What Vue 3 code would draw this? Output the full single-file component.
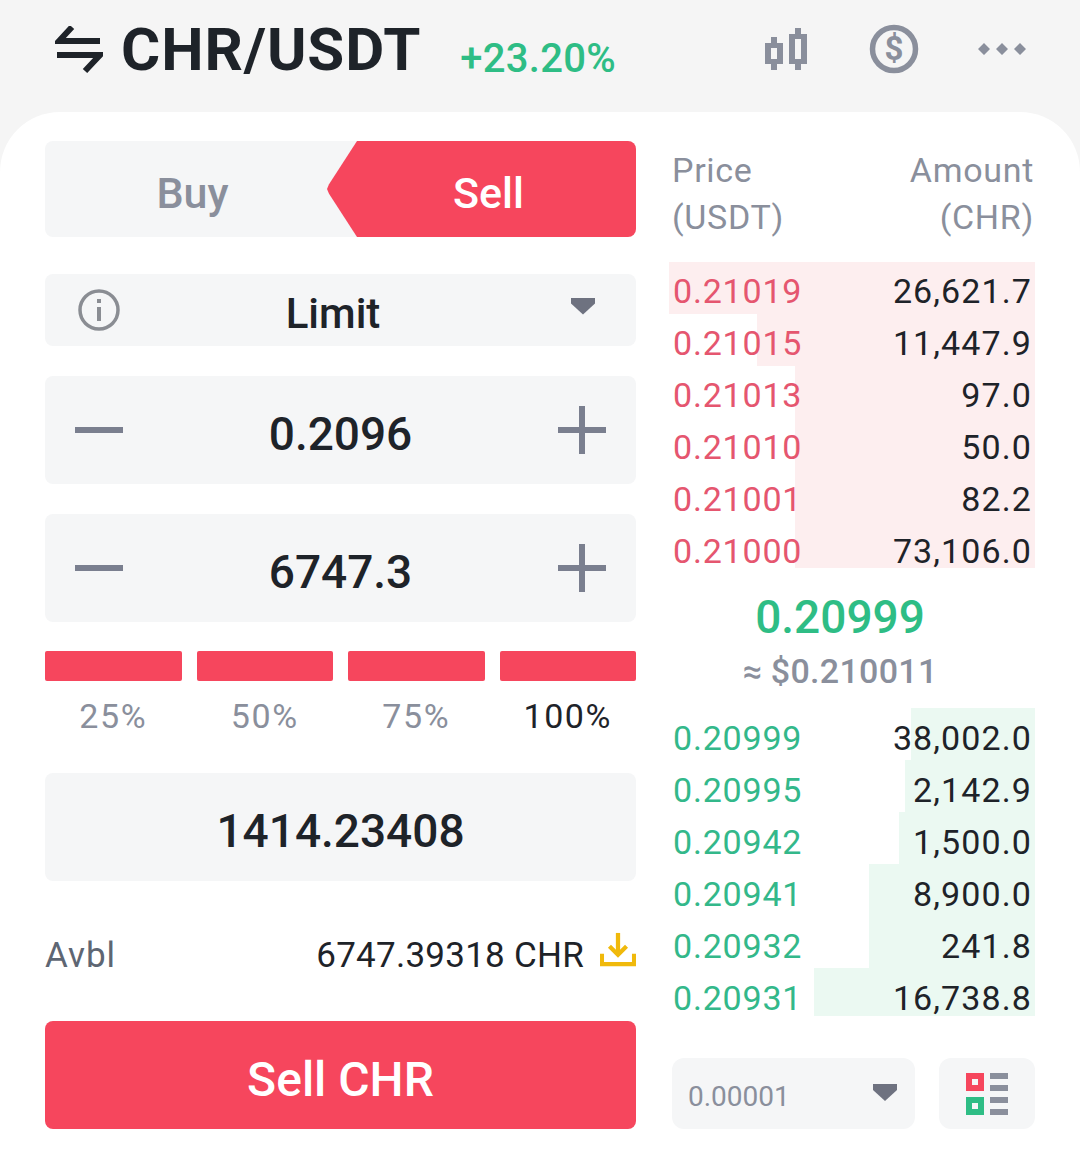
<template>
  <div class="screen">
    <header class="top">
      <svg class="swap" width="48" height="48" viewBox="0 0 48 48" fill="none" stroke="#1e2329" stroke-width="6">
        <path d="M17 1 4 15h41" />
        <path d="M2 29h43L30 45" />
      </svg>
      <span class="pair">CHR/USDT</span>
      <span class="change">+23.20%</span>
      <div class="top-icons">
        <svg width="42" height="42" viewBox="0 0 42 42" fill="#8a8f9c" fill-rule="evenodd">
          <path d="M6 9h6v6h6v21h-6v6H6v-6H0V15h6zM6 20v11h6V20z" />
          <path d="M30 0h6v6h6v30h-6v6h-6v-6h-6V6h6zM30 11v20h6V11z" />
        </svg>
        <svg width="50" height="50" viewBox="0 0 50 50" fill="none" stroke="#8a8f9c">
          <circle cx="25" cy="25" r="21.5" stroke-width="5.5" />
          <text x="25" y="36" text-anchor="middle" class="dollar">$</text>
        </svg>
        <svg class="dots" width="48" height="16" viewBox="0 0 48 16" fill="#8a8f9c">
          <path d="M6 2l6 6-6 6-6-6zM24 2l6 6-6 6-6-6zM42 2l6 6-6 6-6-6z" />
        </svg>
      </div>
    </header>

    <main class="sheet">
      <section class="form">
        <div class="tabs">
          <div class="tab buy">Buy</div>
          <div class="tab sell">Sell</div>
        </div>

        <div class="box type">
          <svg width="44" height="44" viewBox="0 0 44 44" fill="none">
            <circle cx="22" cy="22" r="19" stroke="#8a8d93" stroke-width="3.5" />
            <path d="M22 19v14" stroke="#8a8d93" stroke-width="4" />
            <path d="M22 11v4" stroke="#8a8d93" stroke-width="4" />
          </svg>
          <span class="type-label">Limit</span>
          <span class="caret"></span>
        </div>

        <div v-for="val in steppers" :key="val" class="box stepper">
          <svg width="48" height="48" viewBox="0 0 48 48"><path d="M0 21h48v6H0z" fill="#7a7f8f" /></svg>
          <span class="value">{{ val }}</span>
          <svg width="48" height="48" viewBox="0 0 48 48"><path d="M21 0h6v21h21v6H27v21h-6V27H0v-6h21z" fill="#7a7f8f" /></svg>
        </div>

        <div class="percents">
          <div v-for="p in percents" :key="p.label" class="percent">
            <div class="seg"></div>
            <span :class="{ on: p.on }">{{ p.label }}</span>
          </div>
        </div>

        <div class="box total">1414.23408</div>

        <div class="avbl">
          <span class="avbl-label">Avbl</span>
          <span class="avbl-value">6747.39318 CHR</span>
          <svg class="deposit" width="36" height="36" viewBox="0 0 38 38" fill="none" stroke="#f0b90b" stroke-width="4.5">
            <path d="M2 23v11h34V23" />
            <path d="M19 1v22" />
            <path d="M10 15l9 9 9-9" />
          </svg>
        </div>

        <button class="submit">Sell CHR</button>
      </section>

      <section class="book">
        <div class="book-head">
          <span>Price<br />(USDT)</span>
          <span class="right">Amount<br />(CHR)</span>
        </div>

        <div class="rows asks">
          <div v-for="r in asks" :key="r.price" class="row">
            <div class="depth" :style="{ left: r.from + 'px' }"></div>
            <span class="price">{{ r.price }}</span>
            <span class="amount">{{ r.amount }}</span>
          </div>
        </div>

        <div class="mid">0.20999</div>
        <div class="mid-usd">≈ $0.210011</div>

        <div class="rows bids">
          <div v-for="r in bids" :key="r.price" class="row">
            <div class="depth" :style="{ left: r.from + 'px' }"></div>
            <span class="price">{{ r.price }}</span>
            <span class="amount">{{ r.amount }}</span>
          </div>
        </div>

        <div class="book-foot">
          <div class="precision">
            <span class="precision-val">0.00001</span>
            <span class="caret"></span>
          </div>
          <div class="layout-btn">
            <svg width="42" height="42" viewBox="0 0 42 42">
              <path d="M0 0h18v18H0zM6 6v6h6V6z" fill="#f6465d" fill-rule="evenodd" />
              <path d="M0 24h18v18H0zM6 30v6h6v-6z" fill="#2ebd85" fill-rule="evenodd" />
              <path d="M24 0h18v6H24zM24 12h18v6H24zM24 24h18v6H24zM24 36h18v6H24z" fill="#8a8f9c" />
            </svg>
          </div>
        </div>
      </section>
    </main>
  </div>
</template>

<script setup>
const steppers = ['0.2096', '6747.3']

const percents = [
  { label: '25%' },
  { label: '50%' },
  { label: '75%' },
  { label: '100%', on: true }
]

// from = left edge of the depth bar inside the 366px wide column
const asks = [
  { price: '0.21019', amount: '26,621.7', from: 0 },
  { price: '0.21015', amount: '11,447.9', from: 88 },
  { price: '0.21013', amount: '97.0', from: 126 },
  { price: '0.21010', amount: '50.0', from: 126 },
  { price: '0.21001', amount: '82.2', from: 126 },
  { price: '0.21000', amount: '73,106.0', from: 126 }
]

const bids = [
  { price: '0.20999', amount: '38,002.0', from: 242 },
  { price: '0.20995', amount: '2,142.9', from: 236 },
  { price: '0.20942', amount: '1,500.0', from: 230 },
  { price: '0.20941', amount: '8,900.0', from: 200 },
  { price: '0.20932', amount: '241.8', from: 200 },
  { price: '0.20931', amount: '16,738.8', from: 145 }
]
</script>

<style>
html,
body {
  margin: 0;
  background: #fff;
}
</style>

<style scoped>
.screen {
  width: 1080px;
  height: 1164px;
  background: #f5f5f5;
  font-family: Roboto, "Liberation Sans", sans-serif;
  color: #1e2329;
  overflow: hidden;
}

.top {
  height: 112px;
  display: flex;
  align-items: flex-start;
  padding-left: 55px;
  box-sizing: border-box;
}

.swap {
  margin-top: 26px;
}

.pair {
  margin-left: 18px;
  margin-top: 15px;
  font-size: 60px;
  line-height: 70px;
  font-weight: 700;
  letter-spacing: 0.9px;
}

.change {
  margin-left: 39px;
  margin-top: 34px;
  font-size: 40px;
  line-height: 50px;
  font-weight: 500;
  letter-spacing: 0.3px;
  color: #2ebd85;
}

.top-icons {
  position: absolute;
  top: 24px;
  left: 765px;
  display: flex;
  align-items: center;
  gap: 62px;
}

.dots {
  margin-left: -3px;
}

.dollar {
  font-size: 33px;
  font-weight: 700;
  fill: #8a8f9c;
  stroke: none;
}

.sheet {
  height: 1052px;
  background: #fff;
  border-radius: 60px 60px 0 0;
  display: flex;
  gap: 33px;
  padding: 29px 45px 0;
  box-sizing: border-box;
}

.form {
  width: 591px;
}

.tabs {
  height: 96px;
  display: flex;
  background: #f5f6f7;
  border-radius: 8px;
  overflow: hidden;
  font-size: 43px;
  font-weight: 500;
}

.tab {
  display: flex;
  align-items: center;
  justify-content: center;
  padding-top: 8px;
  box-sizing: border-box;
}

.buy {
  width: 295px;
  color: #8a8f9c;
}

.sell {
  flex: 1;
  margin-left: -13px;
  padding-top: 8px;
  padding-left: 14px;
  color: #fff;
  background: #f6465d;
  clip-path: polygon(30px 0, 100% 0, 100% 100%, 30px 100%, 2px 55%, 0 50%, 2px 45%);
}

.box {
  background: #f5f6f7;
  border-radius: 8px;
  display: flex;
  align-items: center;
}

.type {
  height: 72px;
  margin-top: 37px;
  padding: 0 41px 0 32px;
}

.type-label {
  flex: 1;
  margin-right: 26px;
  padding-top: 6px;
  text-align: center;
  font-size: 42px;
  font-weight: 500;
}

.caret {
  width: 24px;
  height: 17px;
  margin-top: -8px;
  background: #6e7280;
  clip-path: polygon(0 0, 100% 0, 100% 35%, 50% 100%, 0 35%);
}

.stepper {
  height: 108px;
  margin-top: 30px;
  justify-content: space-between;
  padding: 0 30px 0 30px;
}

.value {
  padding-top: 8px;
  font-size: 46px;
  font-weight: 500;
}

.percents {
  display: flex;
  gap: 15px;
  margin-top: 29px;
}

.percent {
  flex: 1;
  text-align: center;
  font-size: 34px;
  color: #8a8f9c;
  letter-spacing: 1.6px;
}

.percent .on {
  color: #1e2329;
}

.seg {
  height: 30px;
  margin-bottom: 15px;
  background: #f6465d;
  border-radius: 2px;
}

.total {
  height: 108px;
  margin-top: 37px;
  padding-top: 8px;
  box-sizing: border-box;
  justify-content: center;
  font-size: 46px;
  font-weight: 500;
}

.avbl {
  display: flex;
  align-items: center;
  margin-top: 54px;
  height: 40px;
  font-size: 35px;
}

.avbl-label {
  flex: 1;
  color: #5e6673;
  letter-spacing: 1px;
}

.avbl-value {
  margin-right: 16px;
  letter-spacing: 0.25px;
}

.deposit {
  margin-top: -10px;
}

.submit {
  display: block;
  width: 100%;
  height: 108px;
  margin-top: 46px;
  padding-top: 10px;
  border: 0;
  border-radius: 8px;
  background: #f6465d;
  color: #fff;
  font: 500 48px Roboto, "Liberation Sans", sans-serif;
}

.book {
  width: 366px;
}

.book-head {
  display: flex;
  justify-content: space-between;
  padding: 6px 1px 0 3px;
  font-size: 34px;
  line-height: 47px;
  color: #8a8f9c;
  letter-spacing: 0.7px;
}

.right {
  text-align: right;
}

.rows {
  font-size: 34px;
}

.asks {
  margin-top: 21px;
}

.bids {
  margin-top: 16px;
}

.row {
  position: relative;
  height: 52px;
  display: flex;
  justify-content: space-between;
  padding: 6px 3px 0 4px;
  box-sizing: border-box;
  line-height: 46px;
}

.bids .row {
  padding-top: 7px;
}

.row:last-child {
  height: 46px;
}

.bids .row:last-child {
  height: 48px;
}

.row span {
  position: relative;
}

.price {
  letter-spacing: 0.8px;
}

.amount {
  letter-spacing: 1.1px;
}

.depth {
  position: absolute;
  top: 0;
  right: 0;
  bottom: 0;
}

.asks .depth {
  background: #fdeeef;
}

.bids .depth {
  background: #ebf9f2;
}

.asks .price {
  color: #e5566f;
}

.bids .price {
  color: #33b88a;
}

.mid {
  margin-top: 21px;
  padding-right: 24px;
  text-align: center;
  font-size: 46px;
  line-height: 56px;
  font-weight: 500;
  color: #2ebd85;
}

.mid-usd {
  margin-top: 5px;
  padding-right: 24px;
  text-align: center;
  font-size: 34px;
  line-height: 42px;
  font-weight: 500;
  letter-spacing: 0.3px;
  color: #8a8f9c;
}

.book-foot {
  display: flex;
  justify-content: space-between;
  margin-top: 42px;
  padding-left: 3px;
}

.precision {
  width: 243px;
  height: 71px;
  box-sizing: border-box;
  padding: 0 18px 0 16px;
  display: flex;
  justify-content: space-between;
  align-items: center;
  background: #f5f6f7;
  border-radius: 12px;
  font-size: 28px;
  color: #8a8f9c;
}

.precision .caret {
  margin-top: -2px;
}

.precision-val {
  padding-top: 6px;
}

.layout-btn {
  width: 96px;
  height: 71px;
  background: #f5f6f7;
  border-radius: 12px;
  display: flex;
  align-items: center;
  justify-content: center;
}
</style>
